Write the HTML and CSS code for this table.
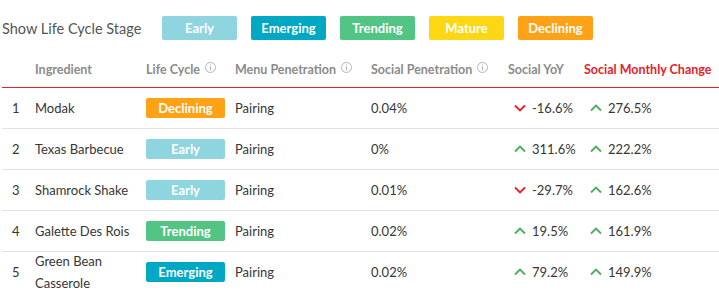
FILE: index.html
```html
<!DOCTYPE html>
<html>
<head>
<meta charset="utf-8">
<link rel="stylesheet" href="styles.css">
</head>
<body>
<div class="page">
  <div class="filters">
    <span class="filters-label">Show Life Cycle Stage</span>
    <span class="pill early">Early</span>
    <span class="pill emerging">Emerging</span>
    <span class="pill trending">Trending</span>
    <span class="pill mature">Mature</span>
    <span class="pill declining">Declining</span>
  </div>

  <div class="row head">
    <div></div>
    <div>Ingredient</div>
    <div>Life Cycle <svg class="info" width="11" height="11" viewBox="0 0 11 11"><circle cx="5.5" cy="5.5" r="5" fill="none" stroke="#b5b5b5" stroke-width="1"/><rect x="5" y="4.5" width="1" height="4" fill="#b5b5b5"/><rect x="5" y="2.5" width="1" height="1" fill="#b5b5b5"/></svg></div>
    <div>Menu Penetration <svg class="info" width="11" height="11" viewBox="0 0 11 11"><circle cx="5.5" cy="5.5" r="5" fill="none" stroke="#b5b5b5" stroke-width="1"/><rect x="5" y="4.5" width="1" height="4" fill="#b5b5b5"/><rect x="5" y="2.5" width="1" height="1" fill="#b5b5b5"/></svg></div>
    <div>Social Penetration <svg class="info" width="11" height="11" viewBox="0 0 11 11"><circle cx="5.5" cy="5.5" r="5" fill="none" stroke="#b5b5b5" stroke-width="1"/><rect x="5" y="4.5" width="1" height="4" fill="#b5b5b5"/><rect x="5" y="2.5" width="1" height="1" fill="#b5b5b5"/></svg></div>
    <div>Social YoY</div>
    <div class="active">Social Monthly Change</div>
  </div>

  <div class="row">
    <div class="num">1</div>
    <div class="name">Modak</div>
    <div><span class="badge declining">Declining</span></div>
    <div>Pairing</div>
    <div>0.04%</div>
    <div class="chg"><svg class="arrow" width="12" height="8" viewBox="0 0 12 8"><polyline points="1,1.5 6,6.5 11,1.5" fill="none" stroke="#e5222a" stroke-width="1.9"/></svg>-16.6%</div>
    <div class="chg"><svg class="arrow" width="12" height="8" viewBox="0 0 12 8"><polyline points="1,6.5 6,1.5 11,6.5" fill="none" stroke="#4caf5a" stroke-width="1.9"/></svg>276.5%</div>
  </div>

  <div class="row">
    <div class="num">2</div>
    <div class="name">Texas Barbecue</div>
    <div><span class="badge early">Early</span></div>
    <div>Pairing</div>
    <div>0%</div>
    <div class="chg"><svg class="arrow" width="12" height="8" viewBox="0 0 12 8"><polyline points="1,6.5 6,1.5 11,6.5" fill="none" stroke="#4caf5a" stroke-width="1.9"/></svg>311.6%</div>
    <div class="chg"><svg class="arrow" width="12" height="8" viewBox="0 0 12 8"><polyline points="1,6.5 6,1.5 11,6.5" fill="none" stroke="#4caf5a" stroke-width="1.9"/></svg>222.2%</div>
  </div>

  <div class="row">
    <div class="num">3</div>
    <div class="name">Shamrock Shake</div>
    <div><span class="badge early">Early</span></div>
    <div>Pairing</div>
    <div>0.01%</div>
    <div class="chg"><svg class="arrow" width="12" height="8" viewBox="0 0 12 8"><polyline points="1,1.5 6,6.5 11,1.5" fill="none" stroke="#e5222a" stroke-width="1.9"/></svg>-29.7%</div>
    <div class="chg"><svg class="arrow" width="12" height="8" viewBox="0 0 12 8"><polyline points="1,6.5 6,1.5 11,6.5" fill="none" stroke="#4caf5a" stroke-width="1.9"/></svg>162.6%</div>
  </div>

  <div class="row">
    <div class="num">4</div>
    <div class="name">Galette Des Rois</div>
    <div><span class="badge trending">Trending</span></div>
    <div>Pairing</div>
    <div>0.02%</div>
    <div class="chg"><svg class="arrow" width="12" height="8" viewBox="0 0 12 8"><polyline points="1,6.5 6,1.5 11,6.5" fill="none" stroke="#4caf5a" stroke-width="1.9"/></svg>19.5%</div>
    <div class="chg"><svg class="arrow" width="12" height="8" viewBox="0 0 12 8"><polyline points="1,6.5 6,1.5 11,6.5" fill="none" stroke="#4caf5a" stroke-width="1.9"/></svg>161.9%</div>
  </div>

  <div class="row last">
    <div class="num">5</div>
    <div class="name two-line">Green Bean Casserole</div>
    <div><span class="badge emerging">Emerging</span></div>
    <div>Pairing</div>
    <div>0.02%</div>
    <div class="chg"><svg class="arrow" width="12" height="8" viewBox="0 0 12 8"><polyline points="1,6.5 6,1.5 11,6.5" fill="none" stroke="#4caf5a" stroke-width="1.9"/></svg>79.2%</div>
    <div class="chg"><svg class="arrow" width="12" height="8" viewBox="0 0 12 8"><polyline points="1,6.5 6,1.5 11,6.5" fill="none" stroke="#4caf5a" stroke-width="1.9"/></svg>149.9%</div>
  </div>
</div>
</body>
</html>
```

FILE: styles.css
```css
html, body {
  margin: 0;
  padding: 0;
  background: #ffffff;
}

body {
  font-family: Lato, "Open Sans", Arial, sans-serif;
  color: #363636;
  font-size: 13px;
}

.page {
  margin-left: 2px;
}

.filters {
  display: flex;
  align-items: center;
  margin-top: 16px;
  height: 24px;
}

.filters-label {
  font-size: 14.5px;
  color: #555555;
  width: 160px;
}

.pill {
  display: flex;
  align-items: center;
  justify-content: center;
  width: 75px;
  height: 24px;
  margin-right: 14px;
  border-radius: 2px;
  color: #ffffff;
  font-weight: 700;
  font-size: 13px;
}

.early { background: #8fd5df; }
.emerging { background: #00a8c3; }
.trending { background: #52c585; }
.mature { background: #fdd714; }
.declining { background: #ffa216; }

.row {
  display: grid;
  grid-template-columns: 33px 111px 89px 136px 137px 76px 1fr;
  align-items: center;
  height: 40px;
  border-bottom: 1px solid #e2e2e2;
}

.row.head {
  margin-top: 11px;
  height: 36px;
  border-bottom: 1px solid #e5222a;
  color: #8b8b8b;
  font-weight: 700;
  font-size: 12.5px;
}

.row.head div {
  display: flex;
  align-items: center;
}

.head .info {
  margin-left: 5px;
  position: relative;
  top: -2px;
}

.head .active {
  color: #e5222a;
}

.row.last {
  border-bottom: none;
}

.num {
  padding-left: 10px;
}

.name {
  line-height: 22px;
  padding-right: 8px;
}

.name.two-line {
  margin: -2px 0;
}

.badge {
  display: flex;
  align-items: center;
  justify-content: center;
  width: 79px;
  height: 20px;
  border-radius: 2px;
  color: #ffffff;
  font-weight: 700;
  font-size: 13px;
}

.chg {
  display: flex;
  align-items: center;
  padding-left: 6px;
}

.arrow {
  margin-right: 6px;
}
```
